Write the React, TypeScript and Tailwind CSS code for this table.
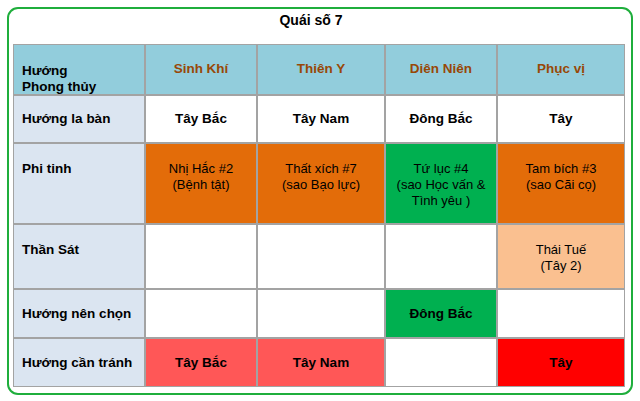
import React from 'react';

type Cell = {
  text: string[];
  bg: string;
  bold?: boolean;
};

const font = { fontFamily: '"Liberation Sans", Arial, sans-serif' };

const rows: { label: string[]; height: string; top?: boolean; cells: Cell[] }[] = [
  {
    label: ['Hướng la bàn'],
    height: 'h-[46px]',
    cells: [
      { text: ['Tây Bắc'], bg: 'bg-white', bold: true },
      { text: ['Tây Nam'], bg: 'bg-white', bold: true },
      { text: ['Đông Bắc'], bg: 'bg-white', bold: true },
      { text: ['Tây'], bg: 'bg-white', bold: true },
    ],
  },
  {
    label: ['Phi tinh'],
    height: 'h-[79px]',
    top: true,
    cells: [
      { text: ['Nhị Hắc #2', '(Bệnh tật)'], bg: 'bg-[#e36c09]' },
      { text: ['Thất xích #7', '(sao Bạo lực)'], bg: 'bg-[#e36c09]' },
      { text: ['Tứ lục #4', '(sao Học vấn &', 'Tình yêu )'], bg: 'bg-[#00b050]' },
      { text: ['Tam bích #3', '(sao Cãi cọ)'], bg: 'bg-[#e36c09]' },
    ],
  },
  {
    label: ['Thần Sát'],
    height: 'h-[63px]',
    top: true,
    cells: [
      { text: [], bg: 'bg-white' },
      { text: [], bg: 'bg-white' },
      { text: [], bg: 'bg-white' },
      { text: ['Thái Tuế', '(Tây 2)'], bg: 'bg-[#fac090]' },
    ],
  },
  {
    label: ['Hướng nên chọn'],
    height: 'h-[47px]',
    cells: [
      { text: [], bg: 'bg-white' },
      { text: [], bg: 'bg-white' },
      { text: ['Đông Bắc'], bg: 'bg-[#00b050]', bold: true },
      { text: [], bg: 'bg-white' },
    ],
  },
  {
    label: ['Hướng cần tránh'],
    height: 'h-[47px]',
    cells: [
      { text: ['Tây Bắc'], bg: 'bg-[#ff5757]', bold: true },
      { text: ['Tây Nam'], bg: 'bg-[#ff5757]', bold: true },
      { text: [], bg: 'bg-white' },
      { text: ['Tây'], bg: 'bg-[#ff0000]', bold: true },
    ],
  },
];

const headers = ['Sinh Khí', 'Thiên Y', 'Diên Niên', 'Phục vị'];

export default function App() {
  return (
    <div className="w-[640px] h-[401px] bg-white pl-[7px] pt-[7px]" style={font}>
      <div className="w-[626px] h-[388px] border-2 border-[#1fae3c] rounded-[11px] flex flex-col">
        <div className="pt-[3px] pr-[18px] text-center text-[14px] leading-[16px] font-bold text-black">
          Quái số 7
        </div>
        <div className="mt-[16px] ml-[4px] w-[612px] bg-[#a3a3a3] p-px grid grid-cols-[130px_110px_126px_110px_126px] gap-[2px] text-[13px] leading-[16px] text-black">
          <div className="h-[49px] bg-[#92cddc] font-bold text-[13.5px] pl-2 pt-[18px]">
            <div>Hướng</div>
            <div>Phong thủy</div>
          </div>
          {headers.map((h) => (
            <div key={h} className="h-[49px] bg-[#92cddc] font-bold text-[13.5px] text-[#984807] flex items-center justify-center pb-[2px]">
              {h}
            </div>
          ))}
          {rows.map((r) => (
            <React.Fragment key={r.label[0]}>
              <div
                className={`${r.height} bg-[#dbe5f1] font-bold text-[13.5px] pl-2 flex ${r.top ? 'items-start pt-[17px]' : 'items-center'}`}
              >
                {r.label[0]}
              </div>
              {r.cells.map((c, i) => (
                <div
                  key={i}
                  className={`${r.height} ${c.bg} ${c.bold ? 'font-bold text-[13.5px]' : ''} flex flex-col ${r.top ? 'justify-start pt-[17px]' : 'justify-center'} items-center text-center`}
                >
                  {c.text.map((t) => (
                    <div key={t}>{t}</div>
                  ))}
                </div>
              ))}
            </React.Fragment>
          ))}
        </div>
      </div>
    </div>
  );
}
